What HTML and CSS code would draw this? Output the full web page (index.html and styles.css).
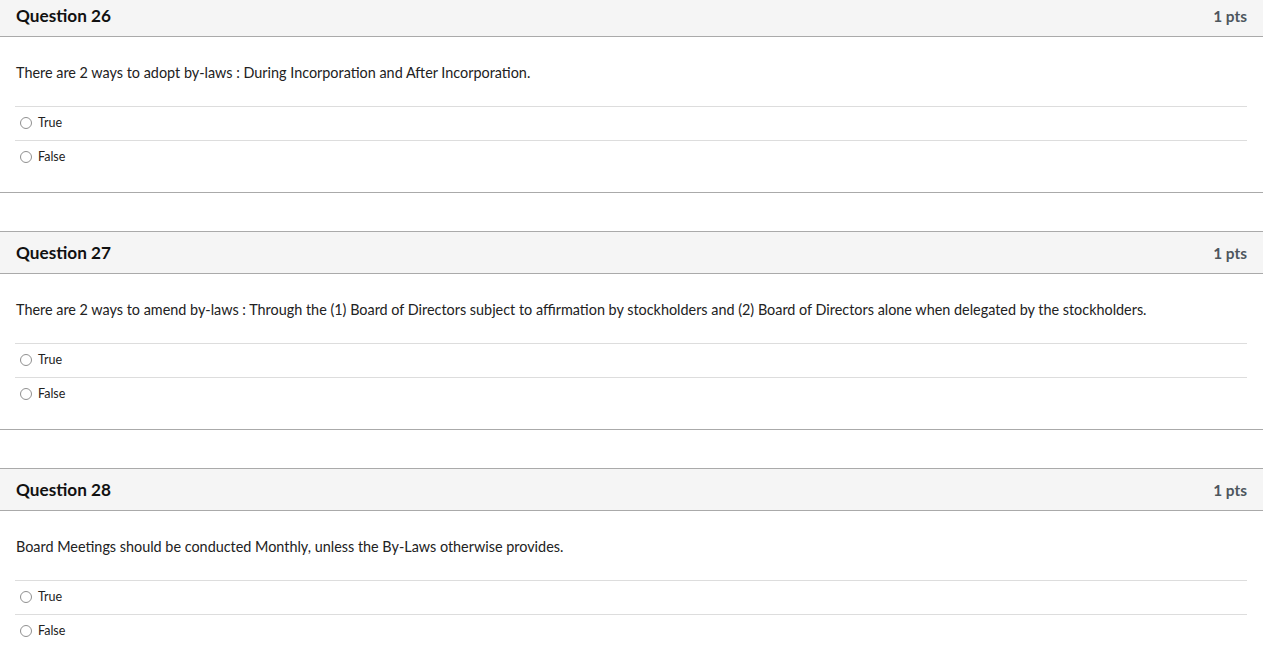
FILE: index.html
```html
<!DOCTYPE html>
<html>
<head>
<meta charset="utf-8">
<link rel="stylesheet" href="styles.css">
</head>
<body>
<div class="quiz">
  <section class="question">
    <div class="q-header">
      <span class="q-title">Question 26</span>
      <span class="q-pts">1 pts</span>
    </div>
    <div class="q-body">
      <p class="q-text">There are 2 ways to adopt by-laws : During Incorporation and After Incorporation.</p>
      <div class="answers">
        <label class="answer"><span class="radio"></span><span>True</span></label>
        <label class="answer"><span class="radio"></span><span>False</span></label>
      </div>
    </div>
  </section>
  <section class="question">
    <div class="q-header">
      <span class="q-title">Question 27</span>
      <span class="q-pts">1 pts</span>
    </div>
    <div class="q-body">
      <p class="q-text">There are 2 ways to amend by-laws : Through the (1) Board of Directors subject to affirmation by stockholders and (2) Board of Directors alone when delegated by the stockholders.</p>
      <div class="answers">
        <label class="answer"><span class="radio"></span><span>True</span></label>
        <label class="answer"><span class="radio"></span><span>False</span></label>
      </div>
    </div>
  </section>
  <section class="question">
    <div class="q-header">
      <span class="q-title">Question 28</span>
      <span class="q-pts">1 pts</span>
    </div>
    <div class="q-body">
      <p class="q-text">Board Meetings should be conducted Monthly, unless the By-Laws otherwise provides.</p>
      <div class="answers">
        <label class="answer"><span class="radio"></span><span>True</span></label>
        <label class="answer"><span class="radio"></span><span>False</span></label>
      </div>
    </div>
  </section>
</div>
</body>
</html>
```
FILE: styles.css
```css
html, body {
  margin: 0;
  padding: 0;
  background: #ffffff;
}
body {
  font-family: Lato, "Open Sans", sans-serif;
  color: #2d3b45;
  overflow: hidden;
}
.quiz {
  margin-top: -6px;
  display: flex;
  flex-direction: column;
  gap: 38px;
}
.question {
  border-top: 1px solid #aaaaaa;
  border-bottom: 1px solid #aaaaaa;
}
.q-header {
  height: 41px;
  background: #f5f5f5;
  border-bottom: 1px solid #aaaaaa;
  display: flex;
  align-items: center;
  justify-content: space-between;
  padding: 0 16px;
}
.q-title {
  font-weight: 700;
  font-size: 17.2px;
  color: #111111;
}
.q-pts {
  font-weight: 700;
  font-size: 15.4px;
  color: #4d565d;
}
.q-body {
  padding: 26px 16px 18px 15px;
}
.q-text {
  margin: 0 0 23px 1px;
  font-size: 14.4px;
  line-height: 20px;
  color: #222222;
}
.answers {
  display: flex;
  flex-direction: column;
}
.answer {
  display: flex;
  align-items: center;
  gap: 6px;
  height: 34px;
  border-top: 1px solid #dddddd;
  box-sizing: border-box;
  padding-left: 5px;
  padding-bottom: 2px;
  font-size: 12.5px;
  color: #222222;
}
.radio {
  width: 10px;
  height: 10px;
  border: 1px solid #909090;
  border-radius: 50%;
  background: #fff;
  flex: none;
}
```
